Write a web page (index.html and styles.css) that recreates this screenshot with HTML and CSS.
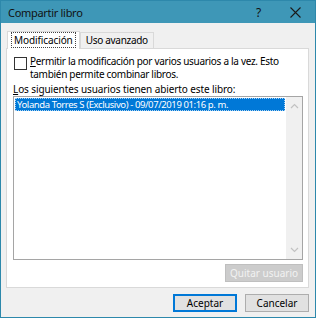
FILE: index.html
```html
<!DOCTYPE html>
<html lang="es">
<head>
  <meta charset="UTF-8" />
  <title>Compartir libro</title>
  <link rel="stylesheet" href="styles.css">
</head>
<body>
  <div class="window">
    <div class="titlebar">
      <span class="title">Compartir libro</span>
      <span class="help">?</span>
      <svg class="close" width="11" height="11" viewBox="0 0 11 11"><path d="M0.5 0.5 L10.5 10.5 M10.5 0.5 L0.5 10.5" stroke="#1b1b1b" stroke-width="1.1" fill="none"/></svg>
    </div>

    <div class="tabs">
      <div class="tab active"><span class="focus">Modificación</span></div>
      <div class="tab">Uso avanzado</div>
    </div>

    <div class="panel">
      <div class="check-row">
        <span class="checkbox"></span>
        <span class="check-label"><u>P</u>ermitir la modificación por varios usuarios a la vez. Esto<br>también permite combinar libros.</span>
      </div>

      <div class="list-label"><u>L</u>os siguientes usuarios tienen abierto este libro:</div>
      <div class="listbox">
        <div class="items">
          <div class="item selected">Yolanda Torres S (Exclusivo) - 09/07/2019 01:16 p. m.</div>
        </div>
        <div class="scrollbar">
          <svg width="9" height="6" viewBox="0 0 9 6"><path d="M1 5 L4.5 1.5 L8 5" stroke="#c2c2c2" stroke-width="1.2" fill="none"/></svg>
          <svg width="9" height="6" viewBox="0 0 9 6"><path d="M1 1 L4.5 4.5 L8 1" stroke="#c2c2c2" stroke-width="1.2" fill="none"/></svg>
        </div>
      </div>
      <div class="panel-actions">
        <button class="btn disabled">Quitar usuario</button>
      </div>
    </div>

    <div class="footer">
      <button class="btn default">Aceptar</button>
      <button class="btn">Cancelar</button>
    </div>
  </div>
</body>
</html>
```

FILE: styles.css
```css
body {
  margin: 0;
  font-family: "Noto Sans", sans-serif;
  font-size: 10px;
  letter-spacing: -0.1px;
  color: #000;
}

.window {
  width: 316px;
  height: 318px;
  box-sizing: border-box;
  border: 1px solid #2d88ab;
  background: #f0f0f0;
  display: flex;
  flex-direction: column;
}

.titlebar {
  height: 22px;
  background: #3e97b7;
  display: flex;
  align-items: center;
  padding-left: 7px;
  font-size: 11px;
  letter-spacing: -0.3px;
  color: #111;
}

.title {
  flex: 1;
}

.help {
  margin-right: 29px;
  font-size: 12px;
}

.close {
  margin-right: 14px;
}

.tabs {
  display: flex;
  align-items: flex-end;
  margin: 7px 0 0 6px;
  height: 18px;
}

.tab {
  height: 15px;
  padding: 0 5px;
  border: 1px solid #d9d9d9;
  border-bottom: none;
  background: #f0f0f0;
  line-height: 15px;
  white-space: nowrap;
  letter-spacing: -0.3px;
}

.tab.active {
  height: 17px;
  background: #fff;
  padding: 0 3px;
  margin-bottom: -1px;
  position: relative;
  z-index: 1;
  line-height: 17px;
  letter-spacing: -0.1px;
}

.tab.active .focus {
  border: 1px dotted #444;
  padding: 0 2px;
}

.panel {
  margin: 0 6px 0 5px;
  height: 240px;
  box-sizing: border-box;
  border: 1px solid #d9d9d9;
  background: #fff;
  padding: 7px 5px 0 6px;
  display: flex;
  flex-direction: column;
}

.check-row {
  display: flex;
  align-items: flex-start;
}

.checkbox {
  width: 11px;
  height: 11px;
  border: 1px solid #333;
  margin: 1px 3px 0 1px;
  flex-shrink: 0;
}

.check-label {
  line-height: 13px;
  margin-top: -1px;
  letter-spacing: -0.3px;
  white-space: nowrap;
}

.list-label {
  margin-top: 2px;
  line-height: 13px;
}

.listbox {
  height: 164px;
  box-sizing: border-box;
  border: 1px solid #a5a5a5;
  display: flex;
}

.items {
  flex: 1;
  padding: 1px;
}

.item.selected {
  background: #0078d7;
  color: #fff;
  height: 11px;
  line-height: 11px;
  border: 1px dotted #aad2f3;
  padding-left: 1px;
  white-space: nowrap;
  font-size: 9.5px;
  letter-spacing: -0.4px;
}

.scrollbar {
  width: 16px;
  background: #f0f0f0;
  display: flex;
  flex-direction: column;
  align-items: center;
  justify-content: space-between;
  padding: 6px 0;
}

.panel-actions {
  display: flex;
  justify-content: flex-end;
  margin-top: 4px;
}

.btn {
  font-family: "Noto Sans", sans-serif;
  font-size: 10px;
  height: 18px;
  width: 64px;
  padding: 0;
  background: #e1e1e1;
  border: 1px solid #adadad;
  color: #000;
  white-space: nowrap;
}

.btn.disabled {
  background: #cccccc;
  border-color: #bfbfbf;
  color: #f2f2f2;
  width: 78px;
}

.btn.default {
  border: 2px solid #0078d7;
}

.footer {
  display: flex;
  justify-content: flex-end;
  gap: 8px;
  margin: 6px 6px 0 0;
}
```
